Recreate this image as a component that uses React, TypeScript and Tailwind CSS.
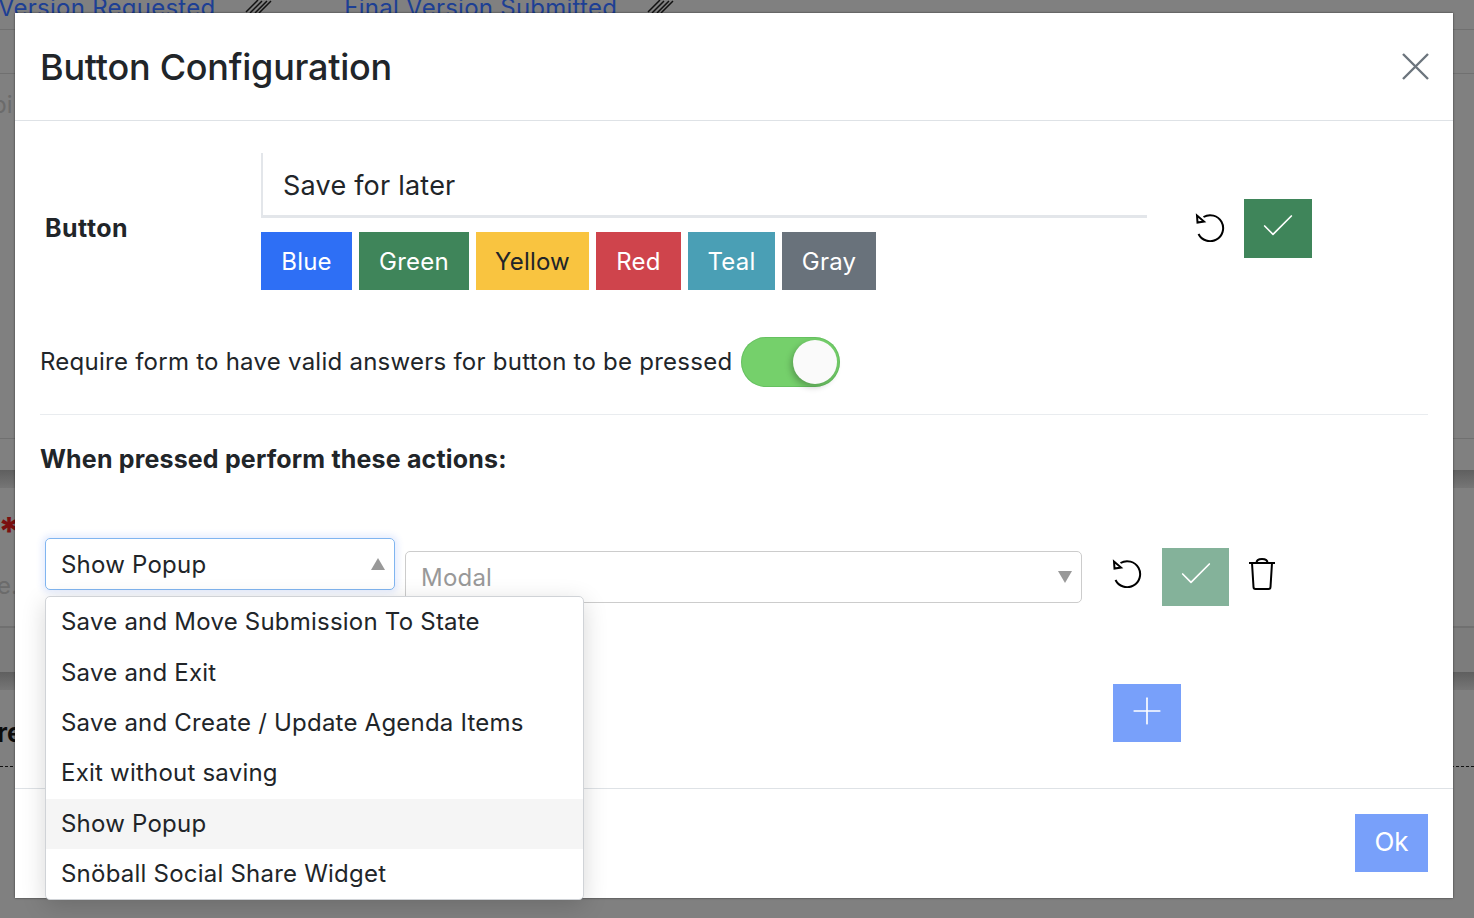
import { Check, Plus } from "lucide-react";

const COLORS = [
  { label: "Blue", cls: "bg-[#2e6ff5] w-[91px] text-white" },
  { label: "Green", cls: "bg-[#3f855a] w-[110px] text-white" },
  { label: "Yellow", cls: "bg-[#f9c440] w-[113px] text-[#212529]" },
  { label: "Red", cls: "bg-[#cf444c] w-[85px] text-white" },
  { label: "Teal", cls: "bg-[#4a9fb5] w-[87px] text-white" },
  { label: "Gray", cls: "bg-[#69727b] w-[94px] text-white" },
];

const OPTIONS = [
  "Save and Move Submission To State",
  "Save and Exit",
  "Save and Create / Update Agenda Items",
  "Exit without saving",
  "Show Popup",
  "Snöball Social Share Widget",
];

const PencilMark = () => (
  <svg viewBox="0 0 30 14" className="h-[14px] w-[30px] fill-none stroke-[#111111] stroke-[1.5]">
    <path d="M1 13L13 1M5 14L17 2M10 14L22 2M14 14L26 2" />
  </svg>
);

const Band = () => <div className="h-[18px] bg-gradient-to-b from-[#5f5f5f] to-[#767676]" />;

const Background = () => (
  <div className="absolute inset-0 overflow-hidden bg-[#808080]">
    <div className="flex h-[30px] items-start border-b border-[#707070] text-[#1d3f94]">
      <div className="-mt-[10px] -ml-[2px] flex items-start text-[24px] leading-[36px] tracking-[0.25px]">
        <span>Version Requested</span>
        <span className="ml-[30px] mt-[9px]"><PencilMark /></span>
        <span className="ml-[69px]">Final Version Submitted</span>
        <span className="ml-[30px] mt-[9px]"><PencilMark /></span>
      </div>
    </div>
    <div className="h-[44px] border-b border-[#707070]" />
    <div className="h-[365px] border-b border-[#707070]">
      <span className="-ml-[8px] block pt-[13px] text-[24px] leading-[36px] text-[#6b6b6b]">pi</span>
    </div>
    <div className="h-[31px]" />
    <Band />
    <div className="h-[140px] border-b-2 border-[#707070] bg-[#808080]">
      <span className="-ml-[2px] block pt-[28px] text-[38px] leading-[30px] font-extrabold text-[#7b1010]">*</span>
      <span className="-ml-[3px] block pt-[22px] text-[24px] leading-[36px] text-[#6b6b6b]">e.</span>
    </div>
    <div className="h-[44px] bg-[#7c7c7c]" />
    <Band />
    <div className="h-[77px] border-b border-dashed border-[#111111]">
      <span className="-ml-[3px] block pt-[25px] text-[26px] leading-[36px] font-bold text-[#0c0c0c]">re</span>
    </div>
  </div>
);

const SquareBtn = ({ className, children }: { className: string; children: React.ReactNode }) => (
  <button className={`flex items-center justify-center text-white ${className}`}>{children}</button>
);

const UndoIcon = ({ className }: { className: string }) => (
  <svg viewBox="0 0 30 30" className={`h-[30px] w-[30px] shrink-0 fill-none stroke-black stroke-2 ${className}`}>
    <path d="M8.500 5A13 13 0 1 1 3.500 22" />
    <path d="M2 3.500L2.500 10.500L9 9.500Z" />
  </svg>
);

export default function App() {
  return (
    <div className="relative h-[918px] w-[1474px] overflow-hidden font-['Inter',sans-serif] text-[#212529]">
      <Background />

      <div className="absolute left-[15px] top-[13px] flex h-[885px] w-[1438px] flex-col bg-white shadow-[0_0_2px_rgba(0,0,0,0.6)]">
        <div className="flex h-[108px] items-center justify-between border-b border-[#dee2e6] pl-[25px] pr-[24px]">
          <h1 className="text-[36px] leading-none font-medium tracking-[-0.25px]">Button Configuration</h1>
          <svg viewBox="0 0 27 27" className="h-[27px] w-[27px] fill-none stroke-[#6c757d] stroke-[2.400]">
            <path d="M1 1L26 26M26 1L1 26" />
          </svg>
        </div>

        <div className="flex-1 px-[25px] tracking-[0.22px]">
          <div className="flex items-center pt-[32px]">
            <div className="w-[221px] pl-[5px] pt-[14px] text-[25px] font-bold tracking-[0.5px]">Button</div>
            <div className="w-[886px]">
              <div className="flex h-[65px] items-center border-l-2 border-b-[3px] border-[#e3e6ea] pl-[20px] pt-[4px] text-[27px]">
                Save for later
              </div>
              <div className="mt-[14px] flex gap-[7px]">
                {COLORS.map((c) => (
                  <button key={c.label} className={`h-[58px] pt-[1px] text-[24px] ${c.cls}`}>
                    {c.label}
                  </button>
                ))}
              </div>
            </div>
            <UndoIcon className="ml-[48px] mt-[10px]" />
            <SquareBtn className="ml-[19px] mt-[14px] h-[59px] w-[68px] bg-[#3f855a] pb-[6px]">
              <Check size={40} strokeWidth={1} />
            </SquareBtn>
          </div>

          <div className="mt-[47px] flex items-center gap-[9px] text-[24px] tracking-[0.25px]">
            <span>Require form to have valid answers for button to be pressed</span>
            <div className="flex h-[50px] w-[99px] items-center justify-end rounded-full bg-[#75d06b] pr-[3px] shadow-[inset_0_0_0_1px_rgba(80,170,80,0.4)]">
              <div className="h-[44px] w-[44px] rounded-full bg-[#fafafa] shadow-[-2px_3px_6px_rgba(0,0,0,0.25)]" />
            </div>
          </div>

          <div className="mt-[27px] border-t border-[#e9ecef]" />

          <h2 className="mt-[26px] text-[25px] leading-[36px] font-bold tracking-[0.17px]">When pressed perform these actions:</h2>

          <div className="relative mt-[61px] flex items-start">
            <div className="ml-[5px] flex h-[52px] w-[350px] items-center justify-between rounded-[5px] border border-[#80b5f0] pl-[15px] pr-[9px] text-[24px] shadow-[0_0_6px_3px_rgba(46,111,245,0.12)]">
              <span className="pt-[1px]">Show Popup</span>
              <span className="h-0 w-0 border-x-[7px] border-b-[12px] border-x-transparent border-b-[#999999]" />
            </div>
            <div className="ml-[10px] mt-[13px] flex h-[52px] w-[677px] items-center justify-between rounded-[5px] border border-[#cccccc] pl-[15px] pr-[9px] text-[24px] text-[#999999]">
              <span className="pt-[2px]">Modal</span>
              <span className="h-0 w-0 border-x-[7px] border-t-[12px] border-x-transparent border-t-[#999999]" />
            </div>
            <UndoIcon className="ml-[30px] mt-[20px]" />
            <SquareBtn className="ml-[20px] mt-[10px] h-[58px] w-[67px] bg-[#84b29a] pb-[6px]">
              <Check size={40} strokeWidth={1} />
            </SquareBtn>
            <svg viewBox="0 0 28 32" className="ml-[19px] mt-[20px] h-[32px] w-[28px] shrink-0 fill-none stroke-black stroke-2">
              <path d="M1 5h26M4 5l1.500 24a2 2 0 0 0 2 2h13a2 2 0 0 0 2-2L24 5M8.500 5c0-3 2-4 5.500-4s5.500 1 5.500 4" />
            </svg>

            <div className="absolute left-[5px] top-[58px] z-10 w-[539px] rounded-[5px] border border-[#d0d3d7] bg-white text-[24px] shadow-[0_6px_24px_rgba(0,0,0,0.16)]">
              {OPTIONS.map((o) => (
                <div key={o} className={`flex h-[50.4px] items-center pl-[15px] ${o === "Show Popup" ? "bg-[#f5f5f5]" : ""}`}>
                  {o}
                </div>
              ))}
            </div>
          </div>

          <SquareBtn className="ml-[1073px] mt-[78px] h-[58px] w-[68px] bg-[#78a0fa] pb-[4px]">
            <Plus size={44} strokeWidth={0.9} />
          </SquareBtn>
        </div>

        <div className="flex h-[110px] items-start justify-end border-t border-[#dee2e6] pr-[25px] pt-[25px]">
          <button className="h-[58px] w-[73px] bg-[#78a0fa] pb-[3px] text-[26px] text-white">Ok</button>
        </div>
      </div>
    </div>
  );
}
